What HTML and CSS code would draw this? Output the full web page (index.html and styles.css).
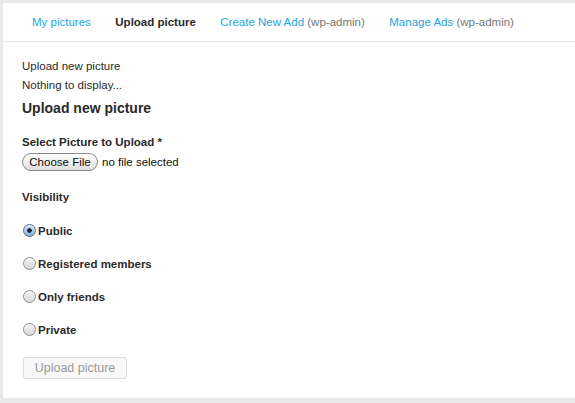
FILE: index.html
```html
<!DOCTYPE html>
<html lang="en">
<head>
<meta charset="utf-8">
<title>Upload picture</title>
<link rel="stylesheet" href="styles.css">
</head>
<body>
<div class="panel">
  <nav class="tabs">
    <a class="tab link" href="#">My pictures</a>
    <span class="tab current">Upload picture</span>
    <span class="tab"><a class="link" href="#">Create New Add</a> <span class="muted">(wp-admin)</span></span>
    <span class="tab"><a class="link" href="#">Manage Ads</a> <span class="muted">(wp-admin)</span></span>
  </nav>
  <div class="content">
    <p class="line">Upload new picture</p>
    <p class="line">Nothing to display...</p>
    <h2 class="title">Upload new picture</h2>
    <form class="form">
      <div class="label">Select Picture to Upload *</div>
      <div class="file">
        <span class="file-btn">Choose File</span>
        <span class="file-name">no file selected</span>
      </div>
      <div class="label vis">Visibility</div>
      <label class="opt"><input class="radio" type="radio" name="vis" checked><span>Public</span></label>
      <label class="opt"><input class="radio" type="radio" name="vis"><span>Registered members</span></label>
      <label class="opt"><input class="radio" type="radio" name="vis"><span>Only friends</span></label>
      <label class="opt"><input class="radio" type="radio" name="vis"><span>Private</span></label>
      <button class="submit" type="button">Upload picture</button>
    </form>
  </div>
</div>
</body>
</html>
```
FILE: styles.css
```css
html, body {
  margin: 0;
  padding: 0;
}
body {
  background: #e9e9e9;
  padding: 3px 0 5px 3px;
  font-family: "Liberation Sans", Arial, sans-serif;
  color: #333;
}
.panel {
  background: #fff;
  height: 395px;
  box-sizing: border-box;
}
.tabs {
  display: flex;
  gap: 24.5px;
  align-items: center;
  height: 38px;
  padding-left: 29px;
  border-bottom: 1px solid #e8e8e8;
  font-size: 11.5px;
}
.tab {
  white-space: nowrap;
}
.link {
  color: #27a3dd;
  text-decoration: none;
}
.current {
  font-weight: bold;
  color: #2a2a2a;
}
.muted {
  color: #777;
}
.content {
  padding: 15px 0 0 19px;
  font-size: 11.5px;
}
.line {
  margin: 0;
  line-height: 19px;
  color: #2a2a2a;
}
.title {
  margin: 3px 0 0;
  font-size: 14px;
  line-height: 20px;
  color: #2a2a2a;
}
.form {
  margin: 0;
}
.label {
  margin-top: 15px;
  font-weight: bold;
  line-height: 18px;
  color: #2a2a2a;
}
.label.vis {
  margin-top: 17px;
}
.file {
  margin-top: 2px;
  display: flex;
  align-items: center;
  gap: 4px;
  height: 18px;
}
.file-btn {
  box-sizing: border-box;
  height: 18px;
  width: 76px;
  border: 1px solid #8a8a8a;
  border-radius: 9px;
  background: linear-gradient(#ffffff, #ececec 60%, #dedede);
  font-size: 11.5px;
  line-height: 16px;
  text-align: center;
  color: #111;
}
.file-name {
  color: #111;
}
.opt {
  display: flex;
  align-items: center;
  height: 33px;
  gap: 2px;
  font-weight: bold;
  color: #2a2a2a;
}
.opt:first-of-type {
  margin-top: 8px;
}
.radio {
  appearance: none;
  -webkit-appearance: none;
  margin: 0 0 0 1px;
  width: 13px;
  height: 13px;
  border-radius: 50%;
  border: 1px solid #8c8c8c;
  background: linear-gradient(#f4f4f4, #d8d8d8);
  box-sizing: border-box;
  box-shadow: inset 0 1px 1px rgba(255,255,255,0.8);
}
.radio:checked {
  border-color: #4d6d8e;
  background: radial-gradient(circle at 50% 50%, #1a2633 0, #1a2633 2px, transparent 2.5px), linear-gradient(#cfe3f6, #7fb0dc);
}
.submit {
  margin-top: 11px;
  width: 104px;
  height: 22px;
  margin-left: 1px;
  border: 1px solid #dadada;
  border-radius: 3px;
  background: #f8f8f8;
  color: #9a9a9a;
  font-family: "Liberation Sans", Arial, sans-serif;
  font-size: 12.5px;
  padding: 0;
  display: block;
}
```
